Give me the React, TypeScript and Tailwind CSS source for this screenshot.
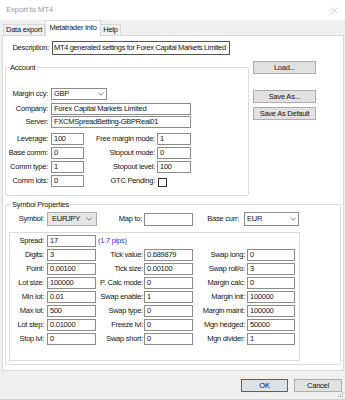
import React from "react";

function Chevron() {
  return (
    <svg width="6" height="4" viewBox="0 0 6 4" className="shrink-0">
      <path d="M0.5 0.8 L3 3.2 L5.5 0.8" fill="none" stroke="#6b6b6b" strokeWidth="0.9" />
    </svg>
  );
}

function Field({ value, className }: { value: string; className: string }) {
  return (
    <div className={"flex items-center bg-white border border-[#8c8c8c] pl-[2px] overflow-hidden whitespace-nowrap " + className}>
      {value}
    </div>
  );
}

function Label({ text, className }: { text: string; className: string }) {
  return <div className={"text-right whitespace-nowrap shrink-0 " + className}>{text}</div>;
}

function Btn({ text, className }: { text: string; className: string }) {
  return (
    <div className={"flex items-center justify-center bg-[#e1e1e1] border whitespace-nowrap " + className}>{text}</div>
  );
}

const rows: [string, string, string, string, string, string][] = [
  ["Digits:", "3", "Tick value:", "0.689879", "Swap long:", "0"],
  ["Point:", "0.00100", "Tick size:", "0.00100", "Swap roll/o:", "3"],
  ["Lot size:", "100000", "P. Calc mode:", "0", "Margin calc:", "0"],
  ["Min lot:", "0.01", "Swap enable:", "1", "Margin init:", "100000"],
  ["Max lot:", "500", "Swap type:", "0", "Margin maint:", "100000"],
  ["Lot step:", "0.01000", "Freeze lvl:", "0", "Mgn hedged:", "50000"],
  ["Stop lvl:", "0", "Swap short:", "0", "Mgn divider:", "1"],
];

export default function App() {
  return (
    <div className="relative w-[346px] h-[400px] bg-[#f0f0f0] border-r border-b border-[#d0d0d0] flex flex-col overflow-hidden font-['Liberation_Sans',Arial,sans-serif] text-[7.5px] tracking-[-0.25px] text-[#141414] leading-[12px]">
      {/* Title bar */}
      <div className="h-[20px] bg-white flex items-center justify-between pl-[6px] pr-[7px]">
        <span className="text-[8px] text-[#9c9c9c]">Export to MT4</span>
        <svg width="7" height="7" viewBox="0 0 7 7">
          <path d="M0.5 0.5 L6.5 6.5 M6.5 0.5 L0.5 6.5" stroke="#c4c4c4" strokeWidth="0.8" />
        </svg>
      </div>

      {/* Tabs */}
      <div className="h-[15px] flex items-end pl-[3px]">
        <div className="w-[42px] h-[11px] border border-b-0 border-[#d9d9d9] bg-[#f0f0f0] flex items-center justify-center whitespace-nowrap">
          Data export
        </div>
        <div className="relative z-10 w-[56px] h-[16px] -mb-px border border-b-0 border-[#d9d9d9] bg-white flex items-center justify-center pb-[1px] whitespace-nowrap">
          Metatrader Info
        </div>
        <div className="w-[20px] h-[11px] border border-b-0 border-l-0 border-[#d9d9d9] bg-[#f0f0f0] flex items-center justify-center">
          Help
        </div>
      </div>

      {/* Tab page */}
      <div className="mx-[2px] w-[342px] h-[336px] bg-white border border-[#d9d9d9] flex flex-col">
        {/* Description */}
        <div className="mt-[5px] h-[14px] flex items-center">
          <Label text="Description:" className="w-[47px] pr-[1px]" />
          <div className="ml-[2px] w-[178px] h-[14px] flex items-center bg-white border border-[#555555] pl-[1px] whitespace-nowrap overflow-hidden tracking-[-0.35px]">
            MT4 generated settings for Forex Capital Markets Limited
          </div>
        </div>

        {/* Account + buttons */}
        <div className="mt-[6px] flex items-start">
          <div className="relative ml-[2px] mt-[6px] w-[244px] h-[129px] border border-[#dcdcdc] rounded-[2px] flex flex-col pt-[20px]">
            <div className="absolute left-[3px] -top-[6px] px-[1px] bg-white">Account</div>
            <div className="h-[12px] flex items-center">
              <Label text="Margin ccy:" className="w-[45px] pr-[3px]" />
              <div className="w-[56px] h-[12px] bg-white border border-[#8c8c8c] flex items-center justify-between pl-[2px] pr-[2px]">
                <span>GBP</span>
                <Chevron />
              </div>
            </div>
            <div className="mt-[3px] h-[12px] flex items-center">
              <Label text="Company:" className="w-[45px] pr-[3px]" />
              <Field value="Forex Capital Markets Limited" className="w-[140px] h-[12px]" />
            </div>
            <div className="mt-[1px] h-[12px] flex items-center">
              <Label text="Server:" className="w-[45px] pr-[3px]" />
              <Field value="FXCMSpreadBetting-GBPReal01" className="w-[140px] h-[12px]" />
            </div>
            <div className="mt-[5px] h-[12px] flex items-center">
              <Label text="Leverage:" className="w-[45px] pr-[3px]" />
              <Field value="100" className="w-[33px] h-[12px]" />
              <Label text="Free margin mode:" className="w-[73px] pr-[2px]" />
              <Field value="1" className="w-[34px] h-[12px]" />
            </div>
            <div className="mt-[2px] h-[12px] flex items-center">
              <Label text="Base comm:" className="w-[45px] pr-[3px]" />
              <Field value="0" className="w-[33px] h-[12px]" />
              <Label text="Stopout mode:" className="w-[73px] pr-[2px]" />
              <Field value="0" className="w-[34px] h-[12px]" />
            </div>
            <div className="mt-[2px] h-[12px] flex items-center">
              <Label text="Comm type:" className="w-[45px] pr-[3px]" />
              <Field value="1" className="w-[33px] h-[12px]" />
              <Label text="Stopout level:" className="w-[73px] pr-[2px]" />
              <Field value="100" className="w-[34px] h-[12px]" />
            </div>
            <div className="mt-[2px] h-[12px] flex items-center">
              <Label text="Comm lots:" className="w-[45px] pr-[3px]" />
              <Field value="0" className="w-[33px] h-[12px]" />
              <Label text="GTC Pending:" className="w-[73px] pr-[2px]" />
              <div className="ml-[1px] mt-[2px] w-[9px] h-[9px] border border-[#333333] bg-white" />
            </div>
          </div>

          <div className="ml-[4px] flex flex-col">
            <Btn text="Load..." className="w-[63px] h-[13px] border-[#adadad]" />
            <Btn text="Save As..." className="mt-[16px] w-[63px] h-[13px] border-[#adadad]" />
            <Btn text="Save As Default" className="mt-[4px] w-[63px] h-[13px] border-[#adadad]" />
          </div>
        </div>

        {/* Symbol Properties */}
        <div className="relative mt-[8px] ml-[2px] w-[336px] h-[161px] border border-[#dcdcdc] rounded-[2px] flex flex-col pt-[7px]">
          <div className="absolute left-[5px] -top-[6px] px-[1px] bg-white">Symbol Properties</div>
          <div className="h-[14px] flex items-center">
            <Label text="Symbol:" className="w-[41px] pr-[3px]" />
            <div className="w-[50px] h-[14px] bg-[#e5e5e5] border border-[#adadad] flex items-center justify-between pl-[4px] pr-[4px]">
              <span>EURJPY</span>
              <Chevron />
            </div>
            <Label text="Map to:" className="w-[47px] pr-[2px]" />
            <Field value="" className="w-[49px] h-[13px]" />
            <Label text="Base curr:" className="w-[51px] pr-[5px]" />
            <div className="w-[55px] h-[14px] bg-white border border-[#8c8c8c] flex items-center justify-between pl-[2px] pr-[2px]">
              <span>EUR</span>
              <Chevron />
            </div>
          </div>

          <div className="mt-[6px] ml-[3px] w-[291px] h-[129px] border border-[#dcdcdc] pt-[2px]">
            <div className="grid grid-cols-[37px_49px_48px_49px_54px_48px] auto-rows-[12px] gap-y-[2px]">
              <Label text="Spread:" className="pr-[3px]" />
              <Field value="17" className="h-[12px]" />
              <div className="col-span-2 pl-[2px] text-[#3434e0] whitespace-nowrap">(1.7 pips)</div>
              <div />
              <div />
              {rows.map((r, i) => (
                <React.Fragment key={i}>
                  <Label text={r[0]} className="pr-[3px]" />
                  <Field value={r[1]} className="h-[12px]" />
                  <Label text={r[2]} className="pr-[1px]" />
                  <Field value={r[3]} className="h-[12px]" />
                  <Label text={r[4]} className="pr-[2px]" />
                  <Field value={r[5]} className="h-[12px]" />
                </React.Fragment>
              ))}
            </div>
          </div>
        </div>
      </div>

      {/* Bottom buttons */}
      <div className="mt-[8px] flex justify-end gap-[6px] pr-[3px]">
        <Btn text="OK" className="w-[47px] h-[13px] border-[#0078d7]" />
        <Btn text="Cancel" className="w-[48px] h-[13px] border-[#adadad]" />
      </div>

      {/* Size grip */}
      <svg width="7" height="7" viewBox="0 0 7 7" className="absolute right-[1px] bottom-[1px]">
        <rect x="5" y="1" width="1" height="1" fill="#a0a0a0" />
        <rect x="3" y="3" width="1" height="1" fill="#a0a0a0" />
        <rect x="5" y="3" width="1" height="1" fill="#a0a0a0" />
        <rect x="1" y="5" width="1" height="1" fill="#a0a0a0" />
        <rect x="3" y="5" width="1" height="1" fill="#a0a0a0" />
        <rect x="5" y="5" width="1" height="1" fill="#a0a0a0" />
      </svg>
    </div>
  );
}
